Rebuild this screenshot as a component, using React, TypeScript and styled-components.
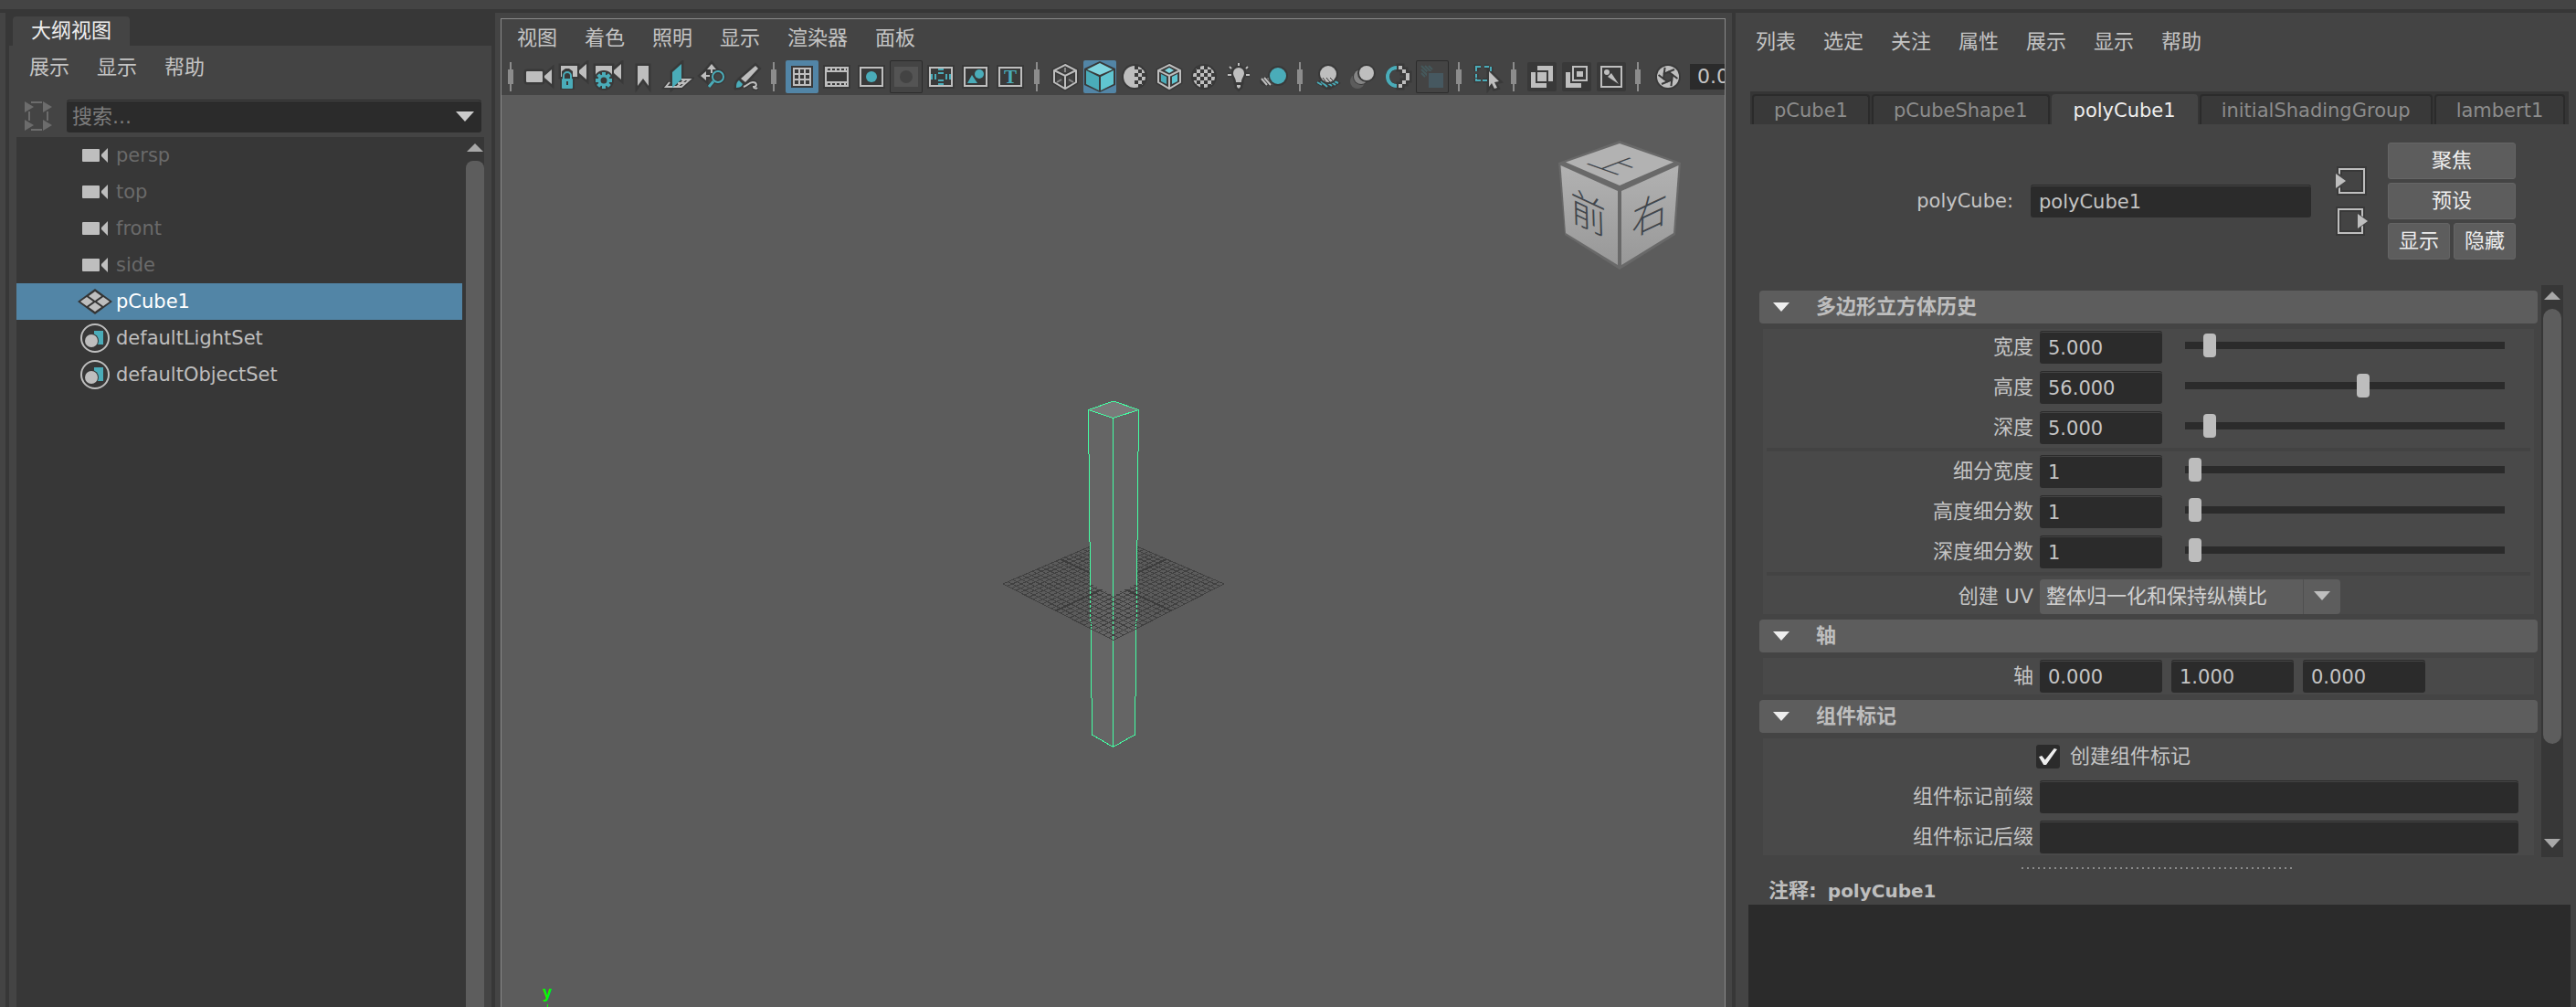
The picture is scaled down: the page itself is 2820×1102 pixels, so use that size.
import React, { useState } from "react";
import styled, { createGlobalStyle } from "styled-components";

const c = {
  panel: "#444444",
  dark: "#373737",
  field: "#2b2b2b",
  raised: "#5d5d5d",
  body: "#494949",
  text: "#c4c4c4",
  dim: "#6a6a6a",
  light: "#bebebe",
  teal: "#4aacb9",
  halo: "#393939",
  select: "#5285a6",
  wire: "#43ffa3",
};

const family = `"DejaVu Sans", "Noto Sans CJK SC", sans-serif`;

const GlobalStyle = createGlobalStyle`
  *, *::before, *::after { box-sizing: border-box; }
  body { margin: 0; background: ${c.panel}; color: ${c.text}; font: 22px/32px ${family}; overflow: hidden; }
  button, input, select, textarea { font: inherit; color: inherit; margin: 0; padding: 0; border: 0; outline: 0; border-radius: 0; background: none; }
  svg { display: block; }
`;

const Window = styled.div`
  display: flex;
  flex-direction: column;
  height: 100vh;
`;
const Shelf = styled.div`
  flex: none;
  height: 14px;
  border-bottom: 4px solid ${c.dark};
`;
const Main = styled.div`
  flex: 1;
  min-height: 0;
  display: grid;
  grid-template-columns: 542px minmax(0, 1fr) 924px;
`;

const MenuBar = styled.nav<{ $height: number; $left: number }>`
  display: flex;
  align-items: center;
  gap: 30px;
  height: ${(p) => p.$height}px;
  padding-left: ${(p) => p.$left}px;
`;
const MenuItem = styled.button`
  white-space: nowrap;
`;

/* ---------- outliner ---------- */
const Outliner = styled.section`
  display: flex;
  flex-direction: column;
  min-height: 0;
  margin-left: 6px;
  border-left: 4px solid ${c.dark};
  border-right: 4px solid ${c.dark};
`;
const DockTabs = styled.div`
  height: 36px;
  padding: 4px 4px 0;
  background: ${c.dark};
`;
const DockTab = styled.button`
  width: 128px;
  height: 32px;
  border-radius: 4px 4px 0 0;
  background: ${c.panel};
  color: #eeeeee;
`;
const SearchRow = styled.div`
  display: flex;
  align-items: center;
  gap: 14px;
  height: 38px;
  margin-top: 10px;
  padding: 0 11px 0 15px;
`;
const SearchBox = styled.div`
  flex: 1;
  display: flex;
  align-items: center;
  height: 36px;
  border-radius: 3px;
  border-top: 1px solid ${c.field};
  box-shadow: inset 0 1px ${c.panel};
  background: ${c.field};
`;
const SearchInput = styled.input`
  flex: 1;
  padding-left: 6px;
  &::placeholder { color: #7c7c7c; opacity: 1; }
`;
const ArrowButton = styled.button`
  display: grid;
  place-items: center;
  width: 36px;
  height: 100%;
`;
const TreeFrame = styled.div`
  flex: 1;
  min-height: 0;
  display: grid;
  grid-template-columns: minmax(0, 1fr) 20px;
  column-gap: 4px;
  margin: 4px 8px 0 8px;
  background: ${c.dark};
`;
const Tree = styled.ul`
  margin: 0;
  padding: 0;
  list-style: none;
  font-size: 21px;
`;
const TreeRow = styled.li<{ $state: string }>`
  display: flex;
  align-items: center;
  gap: 4px;
  height: 40px;
  padding-left: 65px;
  background: ${(p) => (p.$state === "selected" ? c.select : "transparent")};
  color: ${(p) => (p.$state === "selected" ? "#ffffff" : p.$state === "dim" ? c.dim : c.light)};
`;
const ScrollTrack = styled.div<{ $pad: number }>`
  display: flex;
  flex-direction: column;
  align-items: stretch;
  background: ${c.dark};
  padding: 0 ${(p) => p.$pad}px;
`;
const ScrollArrow = styled.button`
  display: grid;
  place-items: center;
  height: 26px;
  padding-bottom: 4px;
`;
const ScrollThumb = styled.div<{ $grow: number; $open?: boolean }>`
  flex: ${(p) => p.$grow} 1 0;
  border-radius: ${(p) => (p.$open ? "8px 8px 0 0" : "10px")};
  background: ${c.raised};
`;
const ScrollRest = styled.div<{ $grow: number }>`
  flex: ${(p) => p.$grow} 1 0;
`;

/* ---------- viewport ---------- */
const ViewPanel = styled.section`
  display: flex;
  min-width: 0;
  padding: 6px 7px 0 6px;
`;
const ViewFrame = styled.div`
  flex: 1;
  min-width: 0;
  display: flex;
  flex-direction: column;
  border: 1px solid #8a8a8a;
  border-bottom: 0;
  overflow: hidden;
`;
const Toolbar = styled.div`
  flex: none;
  display: flex;
  align-items: center;
  height: 41px;
  padding: 3px 0 2px 1px;
  overflow: hidden;
`;
const Tool = styled.button<{ $mode?: string }>`
  flex: none;
  width: 36px;
  height: 36px;
  margin-right: 2px;
  border-radius: 2px;
  background: ${(p) => (p.$mode === "on" ? c.select : "transparent")};
  box-shadow: ${(p) => (p.$mode === "off" ? "inset 0 0 0 1px #2b2b2b" : "none")};
`;
const Divider = styled.div<{ $wide?: boolean }>`
  flex: none;
  position: relative;
  width: 6px;
  height: 16px;
  margin: 0 ${(p) => (p.$wide ? 12 : 10)}px 0 6px;
  background: #8c8c8c;
  &::before {
    content: "";
    position: absolute;
    left: 2px;
    top: -8px;
    width: 2px;
    height: 32px;
    background: #8c8c8c;
  }
`;
const Exposure = styled.input`
  flex: none;
  width: 90px;
  height: 28px;
  margin-left: 4px;
  padding-left: 8px;
  background: ${c.field};
  font-size: 22px;
`;
const Canvas = styled.div`
  position: relative;
  flex: 1;
  min-height: 0;
  display: grid;
  place-items: center;
  background: #5c5c5c;
`;
const ViewCubeSlot = styled.div`
  position: absolute;
  top: 46px;
  right: 48px;
`;
const AxisLabel = styled.div`
  position: absolute;
  left: 45px;
  bottom: 0;
  color: #00ff00;
  font: bold 18px/20px "Liberation Sans", sans-serif;
  text-align: center;
  &::after {
    content: "";
    display: block;
    width: 1px;
    height: 3px;
    margin: 3px auto 0;
    background: #00ff00;
  }
`;

/* ---------- attribute editor ---------- */
const Editor = styled.section`
  display: flex;
  flex-direction: column;
  min-height: 0;
  border-left: 4px solid ${c.dark};
`;
const TabStrip = styled.div`
  flex: none;
  display: flex;
  align-items: flex-end;
  gap: 2px;
  height: 36px;
  margin: 22px 8px 0 16px;
  padding: 0 2px;
  background: #353535;
`;
const Tab = styled.button<{ $active?: boolean }>`
  height: 33px;
  padding: 0 22px;
  border: 2px solid ${(p) => (p.$active ? c.panel : c.field)};
  border-bottom: 0;
  border-radius: 4px 4px 0 0;
  background: ${(p) => (p.$active ? c.panel : "#393939")};
  color: ${(p) => (p.$active ? "#eeeeee" : "#8c8c8c")};
  font-size: 21px;
`;
const NodeHeader = styled.div`
  flex: none;
  display: flex;
  align-items: center;
  justify-content: flex-end;
  margin: 20px 66px 28px 0;
  font-size: 21px;
`;
const NodeLabel = styled.label`
  margin-right: 19px;
`;
const Field = styled.input<{ $width?: number }>`
  width: ${(p) => (p.$width ? p.$width + "px" : "100%")};
  height: 36px;
  padding-left: 9px;
  border-top: 1px solid ${c.field};
  border-radius: 3px;
  box-shadow: inset 0 1px ${c.panel};
  background: ${c.field};
  font-size: 21px;
`;
const LinkButtons = styled.div`
  display: grid;
  gap: 8px;
  margin: 0 20px 0 26px;
`;
const LinkButton = styled.button`
  width: 38px;
  height: 36px;
`;
const ButtonGrid = styled.div`
  display: grid;
  grid-template-columns: 68px 68px;
  gap: 4px;
`;
const PushButton = styled.button<{ $wide?: boolean }>`
  grid-column: ${(p) => (p.$wide ? "span 2" : "auto")};
  height: 40px;
  border: 1px solid #656565;
  border-radius: 3px;
  background: ${c.raised};
  color: #eeeeee;
  font-size: 22px;
`;
const ScrollArea = styled.div`
  flex: none;
  display: grid;
  grid-template-columns: minmax(0, 1fr) 24px;
  column-gap: 4px;
  margin: 0 14px 0 26px;
`;
const Sections = styled.div`
  display: flex;
  flex-direction: column;
  gap: 6px;
  padding: 6px 0 2px;
`;
const SectionHead = styled.button`
  display: flex;
  align-items: center;
  gap: 29px;
  height: 36px;
  padding-left: 15px;
  border-radius: 4px;
  background: ${c.raised};
  color: ${c.light};
  font-weight: bold;
`;
const SectionBody = styled.div`
  display: flex;
  flex-direction: column;
  gap: 8px;
  margin: 0 4px;
  padding: 2px 0;
  background: ${c.body};
`;
const Row = styled.div`
  display: grid;
  grid-template-columns: 296px minmax(0, 1fr);
  column-gap: 7px;
  align-items: center;
  height: 36px;
`;
const RowLabel = styled.label`
  text-align: right;
  white-space: nowrap;
`;
const RowControls = styled.div<{ $gap: number }>`
  display: flex;
  align-items: center;
  gap: ${(p) => p.$gap}px;
  padding-right: 17px;
`;
const Rule = styled.hr`
  width: calc(100% - 8px);
  height: 4px;
  margin: -4px 4px;
  border: 0;
  background: #434343;
`;
const Slider = styled.input`
  appearance: none;
  flex: 1;
  min-width: 0;
  height: 26px;
  margin: 0 15px 4px 0;
  padding: 0 4px;
  border-radius: 4px;
  background: linear-gradient(${c.field}, ${c.field}) center / 100% 8px no-repeat;
  &::-webkit-slider-thumb {
    appearance: none;
    width: 14px;
    height: 26px;
    border-radius: 4px;
    background: #bdbdbd;
  }
`;
const SelectBox = styled.div`
  position: relative;
  width: 329px;
  height: 38px;
`;
const Select = styled.select`
  appearance: none;
  width: 100%;
  height: 100%;
  padding: 0 44px 0 7px;
  border-radius: 4px;
  background: linear-gradient(#505050, #505050) right 40px top / 1px 100% no-repeat ${c.raised};
  color: #d0d0d0;
`;
const SelectArrow = styled.span`
  position: absolute;
  right: 11px;
  top: 13px;
  pointer-events: none;
`;
const CheckLabel = styled.label`
  display: flex;
  align-items: center;
  gap: 11px;
`;
const CheckBox = styled.input`
  appearance: none;
  display: grid;
  place-items: center;
  width: 26px;
  height: 26px;
  margin-left: -4px;
  border-radius: 3px;
  background: ${c.field};
  &:checked::before {
    content: "";
    width: 20px;
    height: 18px;
    background: #eeeeee;
    clip-path: polygon(0 52%, 16% 44%, 34% 70%, 84% 0, 100% 6%, 40% 100%, 26% 100%);
  }
`;
const Splitter = styled.div`
  flex: none;
  width: 298px;
  height: 2px;
  margin: 11px 309px 9px auto;
  background: repeating-linear-gradient(90deg, #8a8a8a 0 2px, transparent 2px 6px);
`;
const NotesLabel = styled.label`
  flex: none;
  display: flex;
  align-items: center;
  gap: 12px;
  height: 30px;
  padding-left: 36px;
  color: ${c.light};
  font-weight: bold;
`;
const NodeName = styled.span`
  font-size: 20px;
`;
const Notes = styled.textarea`
  flex: 1;
  min-height: 0;
  margin: 0 6px 0 14px;
  resize: none;
  background: ${c.field};
`;

/* ---------- icons ---------- */
const IconSvg = styled.svg`
  .halo * { stroke: ${c.halo}; stroke-width: 5px; }
`;
function Icon({ children, plain }: { children: React.ReactNode; plain?: boolean }) {
  return (
    <IconSvg width="36" height="36" viewBox="0 0 36 36" aria-hidden="true">
      {!plain && <g className="halo">{children}</g>}
      {children}
    </IconSvg>
  );
}
const Down = ({ w = 18, h = 10, fill = c.light }) => (
  <svg width={w} height={h} viewBox="0 0 18 10" preserveAspectRatio="none"><path d="M0 0h18L9 10z" fill={fill} /></svg>
);
const Up = () => (
  <svg width="18" height="9" viewBox="0 0 18 9"><path d="M0 9h18L9 0z" fill="#a8a8a8" /></svg>
);

const Frame = () => (
  <>
    <rect x="3" y="5" width="30" height="26" fill={c.halo} />
    <rect x="6" y="8" width="24" height="20" fill={c.halo} stroke={c.light} strokeWidth="2" />
  </>
);
const topCam = <><rect x="4" y="6" width="18" height="12" fill={c.light} /><path d="M32 4v17l-8-7v-3z" fill={c.light} /></>;
const hexFrame = <path d="M18 5l12 6v13l-12 7-12-7V11zM6 11l12 6 12-6M18 17v14" fill="none" stroke={c.light} strokeWidth="2" />;
const gearTeeth = [0, 45, 90, 135, 180, 225, 270, 315];

function Checker({ half }: { half?: boolean }) {
  const id = half ? "disc-half" : "disc-full";
  const cells: React.ReactNode[] = [];
  for (let row = 0; row < 6; row++)
    for (let col = half ? 3 : 0; col < 6; col++)
      if ((row + col) % 2 === 0)
        cells.push(<rect key={`${row}-${col}`} x={6 + col * 4} y={6 + row * 4} width="4" height="4" fill={c.light} />);
  return (
    <Icon plain>
      <clipPath id={id}><circle cx="18" cy="18" r="12" /></clipPath>
      <circle cx="18" cy="18" r="14" fill={c.halo} />
      <g clipPath={`url(#${id})`}>
        {half && <rect x="6" y="6" width="12" height="24" fill={c.light} />}
        {cells}
      </g>
    </Icon>
  );
}

const icons: Record<string, React.ReactNode> = {
  camera: <Icon><rect x="4" y="12" width="18" height="12" rx="1" fill={c.light} /><path d="M32 10v16l-8-7v-2z" fill={c.light} /></Icon>,
  cameraLock: (
    <Icon plain>
      <g className="halo">{topCam}</g>{topCam}
      <path d="M3 32V19l2-1v-6l4-3h4l4 3v6l2 1v13z" fill={c.halo} />
      <path d="M7 20v-3a4 4 0 0 1 8 0v3" fill="none" stroke={c.teal} strokeWidth="2" />
      <rect x="5" y="20" width="12" height="11" rx="1" fill={c.teal} />
      <path d="M11 23v4" stroke={c.halo} strokeWidth="2" />
    </Icon>
  ),
  cameraGear: (
    <Icon plain>
      <g className="halo">{topCam}</g>{topCam}
      <circle cx="13" cy="22" r="11" fill={c.halo} />
      {gearTeeth.map((a) => <rect key={a} x="11" y="13" width="4" height="5" fill={c.teal} transform={`rotate(${a} 13 22)`} />)}
      <circle cx="13" cy="22" r="5" fill="none" stroke={c.teal} strokeWidth="3" />
    </Icon>
  ),
  bookmark: <Icon><path d="M12 6h12v22l-6-8-6 8z" fill={c.light} /></Icon>,
  plane: (
    <Icon>
      <path d="M22 21h9L22 29H5l4-5M18 25h8M26 21l-9 8" fill="none" stroke={c.light} strokeWidth="2" />
      <path d="M22 4v17l-10 9V13z" fill={c.teal} />
    </Icon>
  ),
  panZoom: (
    <Icon>
      <path d="M17 4l5 6h-4v4h-2v-4h-4zM5 17l6-5v4h4v2h-4v4z" fill={c.light} />
      <path d="M19 23l-5 6" stroke={c.teal} strokeWidth="3" />
      <circle cx="24" cy="18" r="6" fill="none" stroke={c.teal} strokeWidth="2" />
    </Icon>
  ),
  brush: (
    <Icon>
      <path d="M27 6l3 3-14 15-5-4z" fill={c.light} />
      <path d="M9 22l4 4c-1 3-4 4-7 4 0-3 0-6 3-8z" fill={c.teal} />
      <path d="M14 29c4-1 6-5 10-5 5 0 5 5 1 5 0 2 3 2 4 1" fill="none" stroke={c.light} strokeWidth="2" />
    </Icon>
  ),
  grid: (
    <Icon plain>
      <rect x="6" y="6" width="24" height="24" fill={c.halo} />
      <path d="M9 8v20M15 8v20M21 8v20M27 8v20M8 9h20M8 15h20M8 21h20M8 27h20" stroke={c.light} strokeWidth="2" />
    </Icon>
  ),
  film: (
    <Icon plain>
      <rect x="3" y="5" width="30" height="26" fill={c.halo} />
      <rect x="5" y="7" width="26" height="22" fill={c.light} />
      <rect x="7" y="13" width="22" height="10" fill={c.halo} />
      <path d="M8 10h21M8 26h21" stroke={c.halo} strokeWidth="2" strokeDasharray="3 2" />
    </Icon>
  ),
  resGate: <Icon plain><Frame /><circle cx="18" cy="18" r="6" fill={c.teal} /></Icon>,
  gateMask: <Icon plain><rect x="5" y="7" width="26" height="22" fill="#545454" /><circle cx="18" cy="18" r="7" fill="#434343" /></Icon>,
  fieldChart: (
    <Icon plain>
      <Frame />
      <path d="M8 15v6M12 15v6M24 15v6M28 15v6M15 10h6M15 14h6M15 22h6M15 26h6" stroke={c.teal} strokeWidth="2" />
    </Icon>
  ),
  safeAction: <Icon plain><Frame /><circle cx="22" cy="15" r="5" fill={c.teal} /><path d="M14 16l6 9H9z" fill={c.teal} /></Icon>,
  safeTitle: (
    <Icon plain>
      <Frame />
      <text x="18" y="25" textAnchor="middle" fontFamily="Liberation Serif, serif" fontSize="21" fontWeight="bold" fill={c.teal}>T</text>
    </Icon>
  ),
  wireCube: (
    <Icon plain>
      <g className="halo">{hexFrame}</g>{hexFrame}
      <path d="M18 8v5M9 24l5-3M27 24l-5-3" stroke="#8a8a8a" strokeWidth="2" />
    </Icon>
  ),
  solidCube: (
    <Icon plain>
      <path d="M18 1l17 8v18l-17 8-17-8V9z" fill={c.halo} />
      <path d="M18 3l14 7-14 6-14-6z" fill="#7fd4de" />
      <path d="M3 11l14 7v15L3 26z" fill={c.teal} />
      <path d="M33 11l-14 7v15l14-7z" fill="#60c5d0" />
    </Icon>
  ),
  halfChecker: <Checker half />,
  texCube: (
    <Icon plain>
      <g className="halo">{hexFrame}</g>{hexFrame}
      <path d="M18 8l5 3-5 3-5-3z" fill="#7fd4de" />
      <path d="M9 15l6 3v8l-6-3z" fill={c.teal} />
      <path d="M27 15l-6 3v8l6-3z" fill="#60c5d0" />
    </Icon>
  ),
  checker: <Checker />,
  bulb: (
    <Icon>
      <path d="M18 8a6 6 0 0 1 6 6c0 4-3 5-3 10h-6c0-5-3-6-3-10a6 6 0 0 1 6-6zM16 27h4v2l-2 2-2-2z" fill={c.light} />
      <path d="M18 3v3M6 16h4M26 16h4M8 7l2 2M28 7l-2 2" stroke={c.light} strokeWidth="2" />
    </Icon>
  ),
  shadow: (
    <Icon plain>
      <ellipse cx="11" cy="23" rx="8" ry="5" fill={c.halo} />
      <path d="M5 20l6 7M8 19l7 8M12 19l6 7" stroke={c.light} strokeWidth="2" />
      <circle cx="23" cy="17" r="11" fill={c.halo} /><circle cx="23" cy="17" r="9" fill={c.teal} />
    </Icon>
  ),
  occlusion: (
    <Icon plain>
      <path d="M4 25l4-3h20l4 3-12 7h-4z" fill={c.halo} />
      <path d="M6 24l5 3M10 23l7 6M15 23l7 5M20 23l6 4M25 23l4 2" stroke={c.teal} strokeWidth="2" />
      <circle cx="18" cy="15" r="11" fill={c.halo} /><circle cx="18" cy="15" r="9" fill={c.light} />
      <path d="M12 19l3 4M16 19l4 5M20 19l3 3" stroke={c.halo} />
    </Icon>
  ),
  motionBlur: (
    <Icon plain>
      <circle cx="12" cy="23" r="8" fill="#5c5c5c" /><circle cx="16" cy="18" r="9" fill={c.halo} />
      <circle cx="16" cy="18" r="8" fill="#858585" /><circle cx="22" cy="14" r="10" fill={c.halo} />
      <circle cx="22" cy="14" r="8" fill={c.light} />
    </Icon>
  ),
  antiAlias: (
    <Icon>
      <path d="M17 8a10 10 0 0 0 0 20" fill="none" stroke={c.teal} strokeWidth="4" />
      <path d="M19 6h4v4h-4zM23 10h4v4h-4zM27 14h4v8h-4zM23 22h4v4h-4zM19 26h4v4h-4z" fill={c.light} />
    </Icon>
  ),
  depthPeel: (
    <Icon plain>
      <path d="M6 6l12 12M10 6l8 8M14 6l4 4M6 10l8 8M6 14l4 4" stroke="#45595c" strokeWidth="2" />
      <rect x="12" y="12" width="18" height="18" fill={c.panel} /><rect x="14" y="14" width="16" height="16" fill="#465860" />
    </Icon>
  ),
  isolate: (
    <Icon>
      <path d="M6 12V7h5M15 7h5M22 7v5M6 15v4M6 20v2h5M13 22h5" fill="none" stroke={c.teal} strokeWidth="2" />
      <path d="M20 12l11 11-5 1 3 6-3 1-3-6-3 4z" fill={c.light} />
    </Icon>
  ),
  xray: (
    <Icon plain>
      <rect x="2" y="2" width="32" height="32" rx="2" fill={c.halo} />
      <path d="M13 6h17v17h-7v7H6V13h7z" fill={c.light} />
      <rect x="12" y="12" width="12" height="12" fill={c.light} stroke={c.halo} strokeWidth="2" />
    </Icon>
  ),
  xrayJoint: (
    <Icon plain>
      <rect x="2" y="2" width="32" height="32" rx="2" fill={c.halo} />
      <path d="M6 13h5v12h12v5H6z" fill={c.light} />
      <rect x="14" y="7" width="15" height="15" fill="none" stroke={c.light} strokeWidth="2" />
      <rect x="18" y="12" width="7" height="6" fill={c.light} />
    </Icon>
  ),
  xrayBone: (
    <Icon plain>
      <rect x="2" y="2" width="32" height="32" rx="2" fill={c.halo} />
      <rect x="7" y="7" width="22" height="22" fill="none" stroke={c.light} strokeWidth="2" />
      <circle cx="13" cy="13" r="3" fill={c.light} /><path d="M14 18l4-4 8 12z" fill={c.light} />
    </Icon>
  ),
  aperture: (
    <Icon plain>
      <circle cx="18" cy="18" r="14" fill={c.halo} /><circle cx="18" cy="18" r="12" fill={c.light} />
      <path d="M18 13l5 2v6l-5 3-5-3v-6z" fill={c.panel} />
      {[0, 60, 120, 180, 240, 300].map((a) => <path key={a} d="M13 15l12-5" stroke={c.halo} strokeWidth="2" transform={`rotate(${a} 18 18)`} />)}
    </Icon>
  ),
};

const toolGroups: string[][] = [
  ["camera", "cameraLock", "cameraGear", "bookmark", "plane", "panZoom", "brush"],
  ["grid", "film", "resGate", "gateMask", "fieldChart", "safeAction", "safeTitle"],
  ["wireCube", "solidCube", "halfChecker", "texCube", "checker", "bulb", "shadow"],
  ["occlusion", "motionBlur", "antiAlias", "depthPeel"],
  ["isolate"],
  ["xray", "xrayJoint", "xrayBone"],
  ["aperture"],
];
const toolMode: Record<string, string> = { grid: "on", solidCube: "on", gateMask: "off", depthPeel: "off" };

const treeIcons: Record<string, React.ReactNode> = {
  camera: <svg width="40" height="32" viewBox="0 0 40 32"><rect x="7" y="9" width="19" height="14" rx="1" fill={c.light} /><path d="M35 8v16l-7-7v-2z" fill={c.light} /></svg>,
  mesh: (
    <svg width="40" height="32" viewBox="0 0 40 32">
      <path d="M21 2l19 14-19 14L2 16z" fill="#343434" />
      <path d="M21 5l7 5-7 5-7-5zM12 11l7 5-7 5-7-5zM30 11l7 5-7 5-7-5zM21 17l7 5-7 5-7-5z" fill={c.light} />
    </svg>
  ),
  set: (
    <svg width="40" height="32" viewBox="0 0 40 32">
      <circle cx="21" cy="16" r="15" fill="none" stroke={c.light} strokeWidth="2" />
      <path d="M20 8h10v15H20z" fill={c.teal} /><circle cx="17" cy="19" r="8" fill={c.dark} /><circle cx="17" cy="19" r="7" fill={c.light} />
    </svg>
  ),
};
const nodes = [
  { name: "persp", icon: "camera", state: "dim" },
  { name: "top", icon: "camera", state: "dim" },
  { name: "front", icon: "camera", state: "dim" },
  { name: "side", icon: "camera", state: "dim" },
  { name: "pCube1", icon: "mesh", state: "selected" },
  { name: "defaultLightSet", icon: "set", state: "normal" },
  { name: "defaultObjectSet", icon: "set", state: "normal" },
];

/* ---------- 3D scene ---------- */
const ground = (u: number, v: number) => {
  const s = (u + v) / 2;
  const t = (u - v) / 2;
  const w = 1 - 0.084 * s;
  return `${(1219 + (121 * t) / w).toFixed(1)} ${(639 + (56.4 * s) / w).toFixed(1)}`;
};
function Scene() {
  const lines: string[] = [];
  for (let i = -12; i <= 12; i++) {
    const k = i / 12;
    lines.push(`M${ground(k, -1)}L${ground(k, 1)}M${ground(-1, k)}L${ground(1, k)}`);
  }
  return (
    <svg width="280" height="470" viewBox="1079 368 280 470" shapeRendering="crispEdges" aria-label="pCube1">
      <path d="M1193 639L1195.500 804l23 13.500 24-13.500 2.500-165z" fill="#656565" />
      <path d="M1193.500 639L1195.500 804l23 13.500 24-13.500 2-165M1218.500 650V817" fill="none" stroke={c.wire} />
      <path d={lines.join("")} fill="none" stroke="#404040" />
      <path d={`M${ground(0, -1)}L${ground(0, 1)}M${ground(-1, 0)}L${ground(1, 0)}`} stroke="#3c3c3c" strokeWidth="2" />
      <path d="M1191.500 448.500L1193.500 639l25 12 26-12 2-190.500-28 9z" fill="#656565" />
      <path d="M1191.500 448.500l27.500-9.500 27.500 9.500-28 9z" fill="#7a7a7a" />
      <path d="M1193.500 640l-2-191.500 27.500-9.500 27.500 9.500-2 191.500M1191.500 448.500l27 9 28-9M1218.500 457V651" fill="none" stroke={c.wire} />
    </svg>
  );
}
function ViewCube() {
  const face = { fontFamily: '"Noto Sans CJK SC", sans-serif', fontWeight: 300, fontSize: 40, textAnchor: "middle" as const, fill: "#41464c" };
  return (
    <svg width="140" height="150" viewBox="1700 150 140 150" aria-label="ViewCube">
      <defs>
        <linearGradient id="side-shade" x1="0" y1="0" x2="0" y2="1"><stop offset="0" stopColor="#b2b2b2" /><stop offset="1" stopColor="#989898" /></linearGradient>
      </defs>
      <path d="M1773 154l67 24-6 79-61 38-60-38-7-79z" fill="#696969" />
      <path d="M1773 157l59 20.500-59 25.500-59-25.500z" fill="#b2b2b2" />
      <path d="M1708.500 181l62.500 28v81l-57-35z" fill="url(#side-shade)" />
      <path d="M1837.500 181l-62.500 28v81l57-35z" fill="url(#side-shade)" />
      <text {...face} transform="matrix(.95 .34 -.95 .36 1768 180)" y="14">上</text>
      <text {...face} transform="matrix(.98 .46 .03 1.1 1739 234)" y="14">前</text>
      <text {...face} transform="matrix(.98 -.46 -.03 1.1 1806 235)" y="14">右</text>
    </svg>
  );
}

function NumberRow({ label, id, initial, min = 0, max = 100 }: { label: string; id: string; initial: string; min?: number; max?: number }) {
  const [value, setValue] = useState(initial);
  const decimals = initial.includes(".");
  return (
    <Row>
      <RowLabel htmlFor={id}>{label}</RowLabel>
      <RowControls $gap={25}>
        <Field $width={134} id={id} value={value} onChange={(e) => setValue(e.target.value)} />
        <Slider
          type="range"
          aria-label={label}
          min={min}
          max={max}
          value={parseFloat(value) || min}
          onChange={(e) => setValue(decimals ? Number(e.target.value).toFixed(3) : e.target.value)}
        />
      </RowControls>
    </Row>
  );
}
const Head = ({ children }: { children: string }) => (
  <SectionHead><Down fill="#eeeeee" />{children}</SectionHead>
);

const sizeRows = [
  { id: "width", label: "宽度", initial: "5.000" },
  { id: "height", label: "高度", initial: "56.000" },
  { id: "depth", label: "深度", initial: "5.000" },
];
const divisionRows = [
  { id: "sw", label: "细分宽度", initial: "1" },
  { id: "sh", label: "高度细分数", initial: "1" },
  { id: "sd", label: "深度细分数", initial: "1" },
];

export default function App() {
  return (
    <>
      <GlobalStyle />
      <Window>
        <Shelf />
        <Main>
          <Outliner>
            <DockTabs><DockTab>大纲视图</DockTab></DockTabs>
            <MenuBar $height={48} $left={22}>
              {["展示", "显示", "帮助"].map((m) => <MenuItem key={m}>{m}</MenuItem>)}
            </MenuBar>
            <SearchRow>
              <svg width="34" height="34" viewBox="0 0 34 34" fill="#6c6c6c">
                <path d="M2 1l10 6-10 6zM22 1l10 6-10 6zM2 21l10 6-10 6zM22 21l10 6-10 6zM9 1h12v2H9zM9 31h12v2H9zM6 12h2v10H6zM26 12h2v10h-2z" />
              </svg>
              <SearchBox>
                <SearchInput aria-label="搜索" placeholder="搜索..." />
                <ArrowButton aria-label="搜索选项"><Down w={20} h={11} fill="#cccccc" /></ArrowButton>
              </SearchBox>
            </SearchRow>
            <TreeFrame>
              <Tree>
                {nodes.map((n) => (
                  <TreeRow key={n.name} $state={n.state}>{treeIcons[n.icon]}{n.name}</TreeRow>
                ))}
              </Tree>
              <ScrollTrack $pad={0}>
                <ScrollArrow aria-label="向上滚动"><Up /></ScrollArrow>
                <ScrollThumb $grow={1} $open />
              </ScrollTrack>
            </TreeFrame>
          </Outliner>

          <ViewPanel>
            <ViewFrame>
              <MenuBar $height={42} $left={17}>
                {["视图", "着色", "照明", "显示", "渲染器", "面板"].map((m) => <MenuItem key={m}>{m}</MenuItem>)}
              </MenuBar>
              <Toolbar>
                {toolGroups.map((group, i) => (
                  <React.Fragment key={i}>
                    <Divider $wide={i === toolGroups.length - 1} />
                    {group.map((name) => (
                      <Tool key={name} aria-label={name} $mode={toolMode[name]}>{icons[name]}</Tool>
                    ))}
                  </React.Fragment>
                ))}
                <Exposure aria-label="曝光" defaultValue="0.00" />
              </Toolbar>
              <Canvas>
                <Scene />
                <ViewCubeSlot><ViewCube /></ViewCubeSlot>
                <AxisLabel>y</AxisLabel>
              </Canvas>
            </ViewFrame>
          </ViewPanel>

          <Editor>
            <MenuBar $height={64} $left={22}>
              {["列表", "选定", "关注", "属性", "展示", "显示", "帮助"].map((m) => <MenuItem key={m}>{m}</MenuItem>)}
            </MenuBar>
            <TabStrip>
              {["pCube1", "pCubeShape1", "polyCube1", "initialShadingGroup", "lambert1"].map((t) => (
                <Tab key={t} $active={t === "polyCube1"}>{t}</Tab>
              ))}
            </TabStrip>
            <NodeHeader>
              <NodeLabel htmlFor="node">polyCube:</NodeLabel>
              <Field $width={307} id="node" defaultValue="polyCube1" />
              <LinkButtons>
                <LinkButton aria-label="输入连接">
                  <svg width="38" height="36" viewBox="0 0 38 36">
                    <rect x="5" y="5" width="27" height="26" fill="none" stroke={c.halo} strokeWidth="6" />
                    <rect x="5" y="5" width="27" height="26" fill="none" stroke={c.light} strokeWidth="2" />
                    <path d="M0 7l16 11L0 29z" fill={c.panel} /><path d="M1 10l11 8-11 8z" fill={c.light} />
                  </svg>
                </LinkButton>
                <LinkButton aria-label="输出连接">
                  <svg width="38" height="36" viewBox="0 0 38 36">
                    <rect x="4" y="5" width="26" height="26" fill="none" stroke={c.halo} strokeWidth="6" />
                    <rect x="4" y="5" width="26" height="26" fill="none" stroke={c.light} strokeWidth="2" />
                    <path d="M23 8l15 10-15 10z" fill={c.panel} /><path d="M25 10l11 8-11 8z" fill={c.light} />
                  </svg>
                </LinkButton>
              </LinkButtons>
              <ButtonGrid>
                <PushButton $wide>聚焦</PushButton>
                <PushButton $wide>预设</PushButton>
                <PushButton>显示</PushButton>
                <PushButton>隐藏</PushButton>
              </ButtonGrid>
            </NodeHeader>

            <ScrollArea>
              <Sections>
                <Head>多边形立方体历史</Head>
                <SectionBody>
                  {sizeRows.map((r) => <NumberRow key={r.id} {...r} />)}
                  <Rule />
                  {divisionRows.map((r) => <NumberRow key={r.id} {...r} min={1} max={50} />)}
                  <Rule />
                  <Row>
                    <RowLabel htmlFor="uv">创建 UV</RowLabel>
                    <SelectBox>
                      <Select id="uv"><option>整体归一化和保持纵横比</option></Select>
                      <SelectArrow><Down /></SelectArrow>
                    </SelectBox>
                  </Row>
                </SectionBody>
                <Head>轴</Head>
                <SectionBody>
                  <Row>
                    <RowLabel htmlFor="axis-x">轴</RowLabel>
                    <RowControls $gap={10}>
                      <Field $width={134} id="axis-x" defaultValue="0.000" />
                      <Field $width={134} aria-label="轴 Y" defaultValue="1.000" />
                      <Field $width={134} aria-label="轴 Z" defaultValue="0.000" />
                    </RowControls>
                  </Row>
                </SectionBody>
                <Head>组件标记</Head>
                <SectionBody>
                  <Row>
                    <span />
                    <CheckLabel><CheckBox type="checkbox" defaultChecked />创建组件标记</CheckLabel>
                  </Row>
                  <Row>
                    <RowLabel htmlFor="prefix">组件标记前缀</RowLabel>
                    <RowControls $gap={0}><Field id="prefix" /></RowControls>
                  </Row>
                  <Row>
                    <RowLabel htmlFor="suffix">组件标记后缀</RowLabel>
                    <RowControls $gap={0}><Field id="suffix" /></RowControls>
                  </Row>
                </SectionBody>
              </Sections>
              <ScrollTrack $pad={2}>
                <ScrollArrow aria-label="向上滚动"><Up /></ScrollArrow>
                <ScrollThumb $grow={476} />
                <ScrollRest $grow={98} />
                <ScrollArrow aria-label="向下滚动"><Down fill="#a8a8a8" /></ScrollArrow>
              </ScrollTrack>
            </ScrollArea>
            <Splitter />
            <NotesLabel htmlFor="notes">注释:<NodeName>polyCube1</NodeName></NotesLabel>
            <Notes id="notes" />
          </Editor>
        </Main>
      </Window>
    </>
  );
}
